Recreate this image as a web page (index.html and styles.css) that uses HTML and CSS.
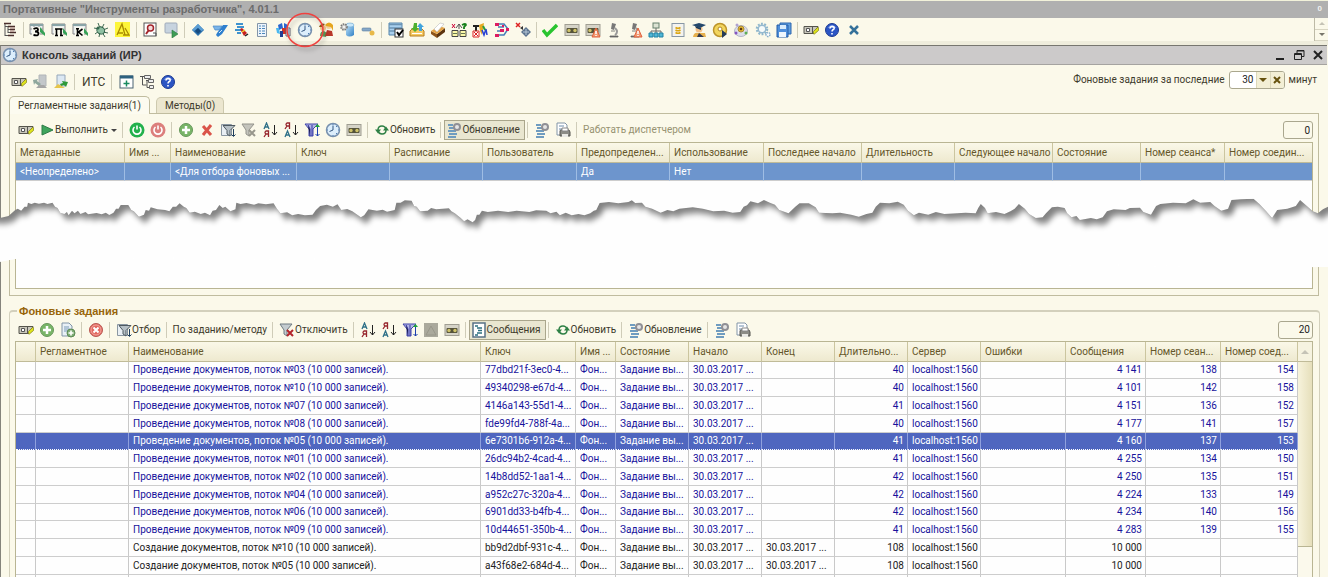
FILE: index.html
```html
<!DOCTYPE html>
<html lang="ru">
<head>
<meta charset="utf-8">
<title>Консоль заданий (ИР)</title>
<link rel="stylesheet" href="styles.css">
</head>
<body>
<svg class="sprite" aria-hidden="true">
  <defs>
    <linearGradient id="blueG" x1="0" y1="0" x2="1" y2="1"><stop offset="0" stop-color="#bfe4fa"/><stop offset="1" stop-color="#2f7fc4"/></linearGradient>
  </defs>
  <symbol id="tree" viewBox="0 0 16 16"><path d="M3 1v13M3 4.500h3M6 7.500h3M6 10.500h3M3 13.500h3M6 4v7" stroke="#555" fill="none"/><path d="M2 1.500h7M6 4.500h7M8 7.500h5M8 10.500h6M6 13.500h6" stroke="#4a2f2c" stroke-width="1.400"/><path d="M8 6h5M8 9h4" stroke="#b08a84"/></symbol>
  <symbol id="grid3" viewBox="0 0 16 16"><path d="M1 2h13v10H1z" fill="#e9eef0" stroke="#888"/><path d="M1 2h13v2H1z" fill="#8aa5a8"/><path d="M1 7h13M5 4v7M10 4v7" stroke="#999"/><path d="M11 5l5 6v3l-5-4z" fill="#36a256"/><rect x="3" y="5" width="8" height="10" fill="#f9f9ef"/><path d="M4.500 7q4-2 4.500.5 0 2-3 2 3.500 0 3.500 2.200 0 2.500-5 1.300" stroke="#000" stroke-width="1.800" fill="none"/></symbol>
  <symbol id="gridP" viewBox="0 0 16 16"><path d="M1 2h13v10H1z" fill="#e9eef0" stroke="#888"/><path d="M1 2h13v2H1z" fill="#8aa5a8"/><path d="M11 5l5 6v3l-5-4z" fill="#36a256"/><rect x="3" y="5" width="9" height="10" fill="#f9f9ef"/><path d="M5.500 14V7h4.500v7M4 7h7.500M4 13.500h3M9 13.500h3" stroke="#000" stroke-width="1.600" fill="none"/></symbol>
  <symbol id="gridK" viewBox="0 0 16 16"><path d="M1 2h13v10H1z" fill="#e9eef0" stroke="#888"/><path d="M1 2h13v2H1z" fill="#8aa5a8"/><path d="M11 5l5 6v3l-5-4z" fill="#36a256"/><rect x="3" y="5" width="9" height="10" fill="#f9f9ef"/><path d="M5.500 6.500v7M10.500 7l-4 3 4 3.500M4 6.800h3M4 13.500h3" stroke="#000" stroke-width="1.600" fill="none"/></symbol>
  <symbol id="bug" viewBox="0 0 16 16"><path d="M5 1l2 5M11 2L9 6M1 6l5 1M15 6l-5 2M2 12l4-3M15 11l-5-1M6 15l1-5M12 15l-3-5" stroke="#3f6a52"/><ellipse cx="8" cy="8.500" rx="4" ry="3.500" transform="rotate(30 8 8)" fill="#8fc0a2" stroke="#2f5d46"/><circle cx="5" cy="6" r="1.500" fill="#35694f"/></symbol>
  <symbol id="ruler" viewBox="0 0 16 16"><rect x="1" y="0" width="15" height="15" fill="#fdf53a"/><path d="M3 13L8 2l3 11M4 11h5M9 13h6l-4-7" stroke="#a98a00" fill="none" stroke-width="1.300"/></symbol>
  <symbol id="find" viewBox="0 0 16 16"><rect x="2" y="1" width="12" height="13" fill="#fff" stroke="#555"/><circle cx="8.500" cy="6" r="3" fill="#f4dada" stroke="#a3252b" stroke-width="1.500"/><path d="M6.500 8.500L4 12" stroke="#a3252b" stroke-width="2"/><path d="M11 11h3v3" stroke="#555" fill="none"/></symbol>
  <symbol id="run" viewBox="0 0 16 16"><rect x="2" y="1" width="12" height="10" rx="1" fill="#c7d3df" stroke="#a0abba"/><path d="M9 8l6 4-6 4z" fill="#3e9c56" stroke="#287a3e" stroke-width=".6"/></symbol>
  <symbol id="diamond" viewBox="0 0 16 16"><path d="M8 2l6 6-6 6-6-6z" fill="#2d72ad"/><path d="M8 2l6 6-3 1-3-3-4 3-2-1z" fill="#5b9ed4"/><path d="M8 6l3 3-3 3-3-3z" fill="#164b80"/></symbol>
  <symbol id="book" viewBox="0 0 16 16"><path d="M1 4h9L7 8H3z" fill="#7ab4e8" stroke="#4b88c4" stroke-width=".7"/><path d="M5 11l6-8h5l-6 9-4 3-2-2z" fill="#2f80cf"/><path d="M7 11l3-3" stroke="#cfe6f8"/></symbol>
  <symbol id="lines" viewBox="0 0 16 16"><path d="M3 2h7M4 5h7M2 8h6M4 11h4" stroke="#3f93cf" stroke-width="2"/><path d="M7 7l2-1 5 5-3 3z" fill="#c62020"/><path d="M9 10l3-2" stroke="#f3d030" stroke-width="1.500"/><path d="M12 14l3-2" stroke="#222" stroke-width="1.500"/></symbol>
  <symbol id="sheet" viewBox="0 0 16 16"><path d="M3.500 1.500h9v13h-9z" fill="#eef5fb" stroke="#8395a8"/><path d="M5 4h2m1 0h3M5 6.500h2m1 0h3M5 9h2m1 0h3M5 11.500h2m1 0h3" stroke="#4c87bb"/></symbol>
  <symbol id="plug" viewBox="0 0 16 16"><path d="M3 3l4-2 1 5-4 2zM9 1l4 2-2 4-2-1z" fill="#2a67d0"/><path d="M1 6l3 0 1 6-3-1z" fill="#4ab8f0"/><path d="M7 6h4v6H7z" fill="#d13228"/><path d="M5 9h3v6H5z" fill="#223f94"/><path d="M11 6h4v8h-4z" fill="#fff" stroke="#667"/><path d="M12 8h2m-2 2h2m-2 2h2" stroke="#569"/></symbol>
  <symbol id="clock" viewBox="0 0 16 16"><circle cx="8" cy="8" r="6.500" fill="#dceefc" stroke="#7790ad" stroke-width="1.500"/><path d="M8 3.500V8L4.500 9.500" stroke="#33557f" fill="none"/><path d="M8 2v1M8 13v1M2 8h1M13 8h1M11 11l1 1M11 5l1-1" stroke="#4d7fb8"/></symbol>
  <symbol id="users" viewBox="0 0 16 16"><circle cx="5" cy="6" r="3" fill="#f4c78b"/><path d="M1 5q2-5 6-3L4 5z" fill="#8c5a17"/><path d="M2 14q0-5 4-5l3 2-1 4z" fill="#5d9a58"/><circle cx="11" cy="4" r="3" fill="#f7d29c"/><path d="M7 3q4-5 8 0v6l-2-4-5-1z" fill="#e5a61e"/><path d="M7 14l2-6 5 1 1 5z" fill="#b9392a"/></symbol>
  <symbol id="dbgear" viewBox="0 0 16 16"><path d="M7 3v10q3 3 8 0V3z" fill="url(#blueG)"/><ellipse cx="11" cy="3" rx="4" ry="2" fill="#c9e8fa" stroke="#6aa5d0" stroke-width=".6"/><circle cx="5" cy="5" r="3" fill="#c6c6c2" stroke="#777" stroke-width="1.500" stroke-dasharray="1.500 1"/><circle cx="5" cy="5" r="1" fill="#fff"/></symbol>
  <symbol id="key" viewBox="0 0 16 16"><rect x="2" y="6" width="9" height="3" rx="1" fill="#86a9c8" stroke="#5b7d9d" stroke-width=".6"/><circle cx="12" cy="11" r="2.500" fill="#e8b94a"/></symbol>
  <symbol id="formcheck" viewBox="0 0 16 16"><path d="M1 1h13v12H1z" fill="#a9d0ee" stroke="#5585ad"/><path d="M1 2.500h13M1 6h13M1 9h6" stroke="#6b94b5" stroke-width="1.500"/><rect x="7" y="7" width="8" height="8" fill="#fff" stroke="#333"/><path d="M9 10l2 3 4-5" stroke="#000" stroke-width="2" fill="none"/></symbol>
  <symbol id="exchange" viewBox="0 0 16 16"><path d="M1 9l2-2h10l2 2v5H1z" fill="#f5ca62" stroke="#b67c1c"/><path d="M5 1h3v5h2L6 10 2 6h2z" fill="#4eaf2e"/><path d="M11 1l4 4h-2v4h-3V5H8z" fill="#42a4dc"/><path d="M3 11.500h10" stroke="#fff"/></symbol>
  <symbol id="brick" viewBox="0 0 16 16"><path d="M1 9l6 3v4l-6-4z" fill="#8e551a"/><path d="M7 12l8-6v4l-8 6z" fill="#5d3510"/><path d="M1 9l8-5 6 2-8 6z" fill="#e3a244"/><path d="M4 7l6-6 4 1-7 8z" fill="#fff" stroke="#bbb" stroke-width=".6"/></symbol>
  <symbol id="compare" viewBox="0 0 16 16"><path d="M1 2l3 4m0-4L1 6" stroke="#c03"/><path d="M5 6l3-4 3 4M8 2v5" stroke="#555" fill="none"/><path d="M11 3q4-2 4 0l-2 2v2" stroke="#17801b" stroke-width="1.800" fill="none"/><path d="M1 8.500h6v6H1zM9 8.500h6v6H9z" fill="#fbf8a8" stroke="#444"/><path d="M2 11.500h4M10 11.500h4" stroke="#675"/></symbol>
  <symbol id="chart" viewBox="0 0 16 16"><path d="M1 4h6M4 4v5" stroke="#222" stroke-width="2"/><path d="M1 9h6v6H1z" fill="#fff" stroke="#d22"/><path d="M2 10l4 4m0-4l-4 4" stroke="#d22"/><path d="M7 3l5-2-2 12-2-4z" fill="#e5a920"/><path d="M10 8l2 5 2-6 1 6" stroke="#2740d4" stroke-width="1.500" fill="none"/><path d="M11 4l2 4" stroke="#2a9b3c" stroke-width="2"/></symbol>
  <symbol id="schema" viewBox="0 0 16 16"><path d="M3 2h7l4 5-4 6H3M4 5h6M3 9h7" stroke="#467eb8" stroke-width="1.500" fill="none"/><path d="M1 1h4v3H1zM1 12h4v3H1zM6 7h4v3H6zM12 6h3v3h-3zM8 3h2v2H8z" fill="#dd1b62"/></symbol>
  <symbol id="xdiamond" viewBox="0 0 16 16"><path d="M1 1l4 4m0-4L1 5" stroke="#d22" stroke-width="1.500"/><path d="M5 6l3-2v4z" fill="#333"/><path d="M11 5l5 5-5 5-5-5z" fill="#5d748f"/><path d="M11 7v6M8 10h6" stroke="#b6c7d7"/></symbol>
  <symbol id="check" viewBox="0 0 16 16"><path d="M1 8l4 5L15 3" stroke="#29c42f" stroke-width="3.500" fill="none"/></symbol>
  <symbol id="tape" viewBox="0 0 16 16"><rect x="1" y="2.500" width="14" height="11" fill="#d6d4c8" stroke="#a09e92"/><rect x="2.500" y="6" width="11" height="5" rx="1" fill="#55533a"/><circle cx="5" cy="8.500" r="1.700" fill="#cfc36a"/><circle cx="11" cy="8.500" r="1.700" fill="#cfc36a"/></symbol>
  <symbol id="warn" viewBox="0 0 16 16"><path d="M11 6l4 9H7z" fill="#f29a72" stroke="#e0603c"/><path d="M11 9v3m0 1v1" stroke="#fff" stroke-width="1.500"/></symbol>
  <symbol id="scope" viewBox="0 0 16 16"><path d="M6 1l4 1-2 6-3-1z" fill="#777"/><path d="M9 6q4 4 0 7" stroke="#999" stroke-width="2" fill="none"/><path d="M4 14h8v1H4zM5 9h4" stroke="#666" fill="#666" stroke-width=".8"/></symbol>
  <symbol id="org" viewBox="0 0 16 16"><path d="M8 6v3M3 11V9h10v2M8 9v2" stroke="#666" fill="none"/><rect x="5" y="1" width="6" height="5" fill="#dce3d3" stroke="#66806c"/><path d="M1 11h4v4H1zM6 11h4v4H6zM11 11h4v4h-4z" fill="#4fb6d6" stroke="#2383a5"/></symbol>
  <symbol id="note" viewBox="0 0 16 16"><rect x="2" y="1.500" width="12" height="13" fill="#f4f3ee" stroke="#8897a5"/><path d="M5.500 5.500q2.500 1.500 5 0M5.500 8q2.500 1.500 5 0M5.500 10.500q2.500 1.500 5 0" stroke="#dba511" stroke-width="1.700" fill="none"/></symbol>
  <symbol id="grad" viewBox="0 0 16 16"><circle cx="8" cy="7" r="3.500" fill="#f2c08a"/><path d="M1 3l7-2 7 2-6 3z" fill="#24486c"/><path d="M4 4l6 2v2L5 6z" fill="#183a5c"/><path d="M2 15q1-5 5-4l7 0 1 4z" fill="#e6b04c"/><path d="M8 11l5 4H6z" fill="#323a50"/></symbol>
  <symbol id="disc" viewBox="0 0 16 16"><circle cx="8" cy="8" r="6.500" fill="#f2d55d" stroke="#bd942a" stroke-width="1.500"/><circle cx="8" cy="7" r="2" fill="#fff" stroke="#b08720"/><path d="M10 8l5 4-5 4z" fill="#243a57"/></symbol>
  <symbol id="cam" viewBox="0 0 16 16"><ellipse cx="8" cy="9" rx="6.500" ry="5.500" fill="#dcdee9" stroke="#b4b7c7"/><circle cx="8" cy="7" r="3" fill="#e6ba32" stroke="#a88a38"/><circle cx="8" cy="7" r="1.300" fill="#5b3b13"/><circle cx="3" cy="11" r="1.500" fill="#8555c0"/><circle cx="13" cy="11" r="1.500" fill="#5caf55"/><circle cx="4" cy="3" r="1.500" fill="#b0a2d0"/></symbol>
  <symbol id="gears" viewBox="0 0 16 16"><circle cx="7" cy="7" r="5" fill="none" stroke="#8eb6cc" stroke-width="2.500" stroke-dasharray="1.800 1.340"/><circle cx="7" cy="7" r="3.800" fill="#f5fafa" stroke="#95b9cf" stroke-width="1.500"/><circle cx="13" cy="12.500" r="2" fill="#fff" stroke="#85aecb" stroke-width="1.500" stroke-dasharray="1.500 .8"/></symbol>
  <symbol id="save" viewBox="0 0 16 16"><path d="M4 1h11v11H4z" fill="#5f9fe0" stroke="#2e67ae"/><path d="M1 3h11v12H1z" fill="#4f8fdb" stroke="#245da6"/><path d="M4 3h6v4H4z" fill="#d8ebfb"/><path d="M3 10h7v5H3z" fill="#eef6fd"/></symbol>
  <symbol id="form" viewBox="0 0 16 16"><path d="M1 4.500h14l-4 7H1z" fill="#c9c7bb" stroke="#55544c"/><path d="M3.500 6.500h3v3h-3z" fill="#fff" stroke="#555"/><path d="M9.500 5v6" stroke="#555"/><path d="M10.500 9.500l4-4h1v3l-4 3.500h-1z" fill="#dfe41c" stroke="#7d7b20" stroke-width=".7"/></symbol>
  <symbol id="help" viewBox="0 0 16 16"><circle cx="8" cy="8" r="6.500" fill="#2b55c4" stroke="#1d3b91"/><path d="M3.500 6Q8 0 12.500 6 8 4.500 3.500 6z" fill="#7e9de8"/><path d="M6 6.500q.2-2 2.200-2 2.300.2 1.900 2-.3 1-1.500 1.500-.5.400-.5 1.500M8 11v1.500" stroke="#fff" stroke-width="1.600" fill="none"/></symbol>
  <symbol id="close" viewBox="0 0 16 16"><path d="M4 4l8 8m0-8l-8 8" stroke="#35719a" stroke-width="2.500"/></symbol>
  <symbol id="in" viewBox="0 0 16 16"><path d="M7 1h7v11H7z" fill="#c3c7ca" stroke="#b1b5b8"/><path d="M1 6l5-1-1 2 4 3-2 2-4-3-1 2z" fill="#8fa79d"/><path d="M4 14l3-3h5l3 3z" fill="#a5a5a5"/></symbol>
  <symbol id="out" viewBox="0 0 16 16"><path d="M4 1h8v11H4z" fill="#dce8f3" stroke="#96a7ba"/><path d="M9 7l6 1-2 5-2-2-3 1-1-2 3-1z" fill="#2f9a3a"/><path d="M1 14l4-4 7 4z" fill="#e6c54b"/></symbol>
  <symbol id="addwin" viewBox="0 0 16 16"><rect x="2" y="2" width="13" height="12" fill="#fff" stroke="#4a6272"/><path d="M2 3h13" stroke="#2e617f" stroke-width="3"/><path d="M8.500 6.500v6M5.500 9.500h6" stroke="#188a5f" stroke-width="1.500"/></symbol>
  <symbol id="tree2" viewBox="0 0 16 16"><path d="M1 2.500h4M3.500 3v8h4M7 6.500h2m-1 0v7h2" stroke="#555" fill="none"/><path d="M5.500 1.500h6v3h-6zM9.500 5.500h5v3h-5zM10.500 11.500h4v3h-4z" fill="#eee" stroke="#666"/></symbol>
  <symbol id="play" viewBox="0 0 16 16"><path d="M3 3l11 5-11 5z" fill="#3fa55c" stroke="#2f7c47"/></symbol>
  <symbol id="on" viewBox="0 0 16 16"><circle cx="8" cy="8" r="7.500" fill="#22b14c"/><path d="M5.500 5a4 4 0 1 0 5 0M8 3.500v4" stroke="#fff" stroke-width="1.600" fill="none"/></symbol>
  <symbol id="off" viewBox="0 0 16 16"><circle cx="8" cy="8" r="7.500" fill="#dc7f7c"/><path d="M5.500 5a4 4 0 1 0 5 0M8 3.500v4" stroke="#fff" stroke-width="1.600" fill="none"/></symbol>
  <symbol id="add" viewBox="0 0 16 16"><circle cx="8" cy="8" r="6.500" fill="#79b568" stroke="#66975b"/><path d="M8 4v8M4 8h8" stroke="#fff" stroke-width="2.500"/></symbol>
  <symbol id="del" viewBox="0 0 16 16"><path d="M4 4l8 9M12 3l-8 10" stroke="#da5449" stroke-width="3"/></symbol>
  <symbol id="filter" viewBox="0 0 16 16"><path d="M1.500 2.500h10v11h-10z" fill="#e9eff4" stroke="#8a97a2"/><path d="M3 3.500h12l-5 5V14l-3-2V8.500z" fill="#b6c0c6" stroke="#4f5a61"/><path d="M13.500 7v7m-2-1.500l2 2 2-2" stroke="#1e3e5c" fill="none"/></symbol>
  <symbol id="nofilter" viewBox="0 0 16 16"><path d="M1 2h12L8 8v6l-3-2V8z" fill="#c4c4bc" stroke="#93938b"/><path d="M8 8l6 6m0-6l-6 6" stroke="#98978d" stroke-width="2"/></symbol>
  <symbol id="nofilterR" viewBox="0 0 16 16"><path d="M1 2h12L8 8v6l-3-2V8z" fill="#c4ccd0" stroke="#6f7b82"/><path d="M8 8l6 6m0-6l-6 6" stroke="#b3242b" stroke-width="2"/></symbol>
  <symbol id="asc" viewBox="0 0 16 16"><path d="M2 7l2.500-6L7 7M3 5h3" stroke="#2e7088" stroke-width="1.300" fill="none"/><path d="M6.500 15V9H4q-2 1.500 0 3h2.500M4 12l-2 3" stroke="#97242c" stroke-width="1.300" fill="none"/><path d="M12.500 3v10m-2.500-3l2.500 3 2.500-3" stroke="#222" fill="none"/></symbol>
  <symbol id="desc" viewBox="0 0 16 16"><path d="M6.500 7V1H4q-2 1.500 0 3h2.500M4 4L2 7" stroke="#97242c" stroke-width="1.300" fill="none"/><path d="M2 15l2.500-6L7 15M3 13h3" stroke="#2e7088" stroke-width="1.300" fill="none"/><path d="M12.500 3v10m-2.500-3l2.500 3 2.500-3" stroke="#222" fill="none"/></symbol>
  <symbol id="sortf" viewBox="0 0 16 16"><path d="M1 2h13L9 7v7H5V7z" fill="#b3b4e4" stroke="#4044ab"/><path d="M4 3l2 4v7M8 3v11" stroke="#3337a5"/><path d="M13.500 4v10m-2-2l2 2 2-2" stroke="#1c3fae" fill="none"/><path d="M11 5l2.500-3L16 5z" fill="#20a53a"/></symbol>
  <symbol id="refresh" viewBox="0 0 16 16"><path d="M4 8q0-4 4-4 3 0 4 3M12 8q0 4-4 4-3 0-4-3" stroke="#2e8045" stroke-width="1.500" fill="none"/><path d="M1 7.500h6l-3 4zM9 8.500h6l-3-4z" fill="#2e8045"/></symbol>
  <symbol id="listgear" viewBox="0 0 16 16"><path d="M2 3h5M3 6h5M2 9h8M3 12h8M2 15h8" stroke="#6f9cc0" stroke-width="2"/><circle cx="11" cy="5" r="3" fill="#e5e5e5" stroke="#909096" stroke-width="2"/></symbol>
  <symbol id="print" viewBox="0 0 16 16"><path d="M2 1h8l2 2v10H2z" fill="#fff" stroke="#8295a7"/><path d="M4 4h5M4 7h3" stroke="#6a8bac"/><path d="M5 9q0-1 1-1h8l1 2v4H5z" fill="#8b8b85" stroke="#55554f"/><path d="M7 6h6v3H7z" fill="#fff" stroke="#888"/><path d="M7 12h6v3H7z" fill="#e9e9e4"/></symbol>
  <symbol id="addcopy" viewBox="0 0 16 16"><path d="M2 1h7l3 3v10H2z" fill="#e8f0f6" stroke="#8295a7"/><path d="M4 5h5M4 7h6M4 9h4" stroke="#7a9ab8"/><circle cx="11" cy="11" r="4" fill="#7fae75" stroke="#5c8a54"/><path d="M11 8.500v5M8.500 11h5" stroke="#fff" stroke-width="1.600"/></symbol>
  <symbol id="stop" viewBox="0 0 16 16"><circle cx="8" cy="8" r="6.500" fill="#e2685f" stroke="#b85953"/><circle cx="8" cy="8" r="5" fill="none" stroke="#f3a7a0"/><path d="M5.500 5.500l5 5m0-5l-5 5" stroke="#fff" stroke-width="2"/></symbol>
  <symbol id="dim" viewBox="0 0 16 16"><rect x="1" y="1" width="14" height="14" fill="#aaa99c"/><path d="M3 13L8 4l5 9z" fill="none" stroke="#98978a"/></symbol>
  <symbol id="msgs" viewBox="0 0 16 16"><path d="M2 1h12v14H2z" fill="#fff" stroke="#587286" stroke-width="1.500"/><path d="M4 4h3M6 6h5M7 8.500h4M6 11h5M4 13h3" stroke="#2d7080" stroke-width="1.300"/></symbol>
</svg>

<header class="app">
  <div class="app-title"><span>Портативные "Инструменты разработчика", 4.01.1</span><i class="grip">0</i></div>
  <div class="app-bar">
    <div class="main-tools">
      <button aria-label="Дерево"><svg><use href="#tree"/></svg></button><i class="sep"></i>
      <button aria-label="Запросы"><svg><use href="#grid3"/></svg></button>
      <button aria-label="Права"><svg><use href="#gridP"/></svg></button>
      <button aria-label="Код"><svg><use href="#gridK"/></svg></button>
      <button aria-label="Отладка"><svg><use href="#bug"/></svg></button>
      <button aria-label="Конструктор"><svg><use href="#ruler"/></svg></button><i class="sep"></i>
      <button aria-label="Найти"><svg><use href="#find"/></svg></button>
      <button aria-label="Запустить"><svg><use href="#run"/></svg></button><i class="sep"></i>
      <button aria-label="Объект"><svg><use href="#diamond"/></svg></button>
      <button aria-label="Справочник"><svg><use href="#book"/></svg></button>
      <button aria-label="Редактор"><svg><use href="#lines"/></svg></button>
      <button aria-label="Список"><svg><use href="#sheet"/></svg></button>
      <button aria-label="Подписки"><svg><use href="#plug"/></svg></button>
      <button class="marked" aria-label="Консоль заданий"><svg><use href="#clock"/></svg><svg class="ring" viewBox="0 0 40 38"><ellipse cx="20" cy="19" rx="18" ry="16.500"/></svg></button>
      <button aria-label="Пользователи"><svg><use href="#users"/></svg></button>
      <button aria-label="База данных"><svg><use href="#dbgear"/></svg></button>
      <button aria-label="Ключ"><svg><use href="#key"/></svg></button><i class="sep"></i>
      <button aria-label="Обработка"><svg><use href="#formcheck"/></svg></button>
      <button aria-label="Обмен"><svg><use href="#exchange"/></svg></button>
      <button aria-label="Пакет"><svg><use href="#brick"/></svg></button>
      <button aria-label="Сравнение"><svg><use href="#compare"/></svg></button>
      <button aria-label="Отчёт"><svg><use href="#chart"/></svg></button>
      <button aria-label="Схема"><svg><use href="#schema"/></svg></button>
      <button aria-label="Удаление"><svg><use href="#xdiamond"/></svg></button><i class="sep"></i>
      <button aria-label="Проверка"><svg><use href="#check"/></svg></button>
      <button aria-label="Журнал"><svg><use href="#tape"/></svg></button>
      <button aria-label="Ошибки журнала"><svg><use href="#tape"/><use href="#warn"/></svg></button>
      <button aria-label="Исследовать"><svg><use href="#scope"/></svg></button>
      <button aria-label="Исследовать ошибку"><svg><use href="#scope"/><use href="#warn"/></svg></button>
      <button aria-label="Структура"><svg><use href="#org"/></svg></button>
      <button aria-label="Заметка"><svg><use href="#note"/></svg></button>
      <button aria-label="Обучение"><svg><use href="#grad"/></svg></button>
      <button aria-label="Диск"><svg><use href="#disc"/></svg></button>
      <button aria-label="Монитор"><svg><use href="#cam"/></svg></button>
      <button aria-label="Настройки"><svg><use href="#gears"/></svg></button>
      <button aria-label="Сохранить"><svg><use href="#save"/></svg></button><i class="sep"></i>
      <button aria-label="Форма"><svg><use href="#form"/></svg></button>
      <button aria-label="Справка"><svg><use href="#help"/></svg></button>
      <button aria-label="Закрыть панель"><svg><use href="#close"/></svg></button>
    </div>
    <div class="bar-scroll"><button aria-label="Вверх"><i class="up"></i></button><button aria-label="Вниз"><i class="down"></i></button></div>
  </div>
</header>

<main class="window">
  <div class="window-title">
    <svg class="ico"><use href="#clock"/></svg><h1>Консоль заданий (ИР)</h1>
    <div class="window-buttons">
      <button aria-label="Свернуть"><svg viewBox="0 0 12 12"><path d="M2 10h8" stroke="#222" stroke-width="2"/></svg></button>
      <button aria-label="Восстановить"><svg viewBox="0 0 12 12"><path d="M4 4V1.500h7v6H8M4 2h7M1.500 4.500h7v6h-7zM1 5.500h7" stroke="#222" fill="none"/></svg></button>
      <button aria-label="Закрыть"><svg viewBox="0 0 12 12"><path d="M2 2l8 8m0-8l-8 8" stroke="#222" stroke-width="2"/></svg></button>
    </div>
  </div>
  <div class="command-row">
    <div class="tools">
      <button aria-label="Форма"><svg><use href="#form"/></svg></button>
      <button aria-label="Загрузить"><svg><use href="#in"/></svg></button>
      <button aria-label="Выгрузить"><svg><use href="#out"/></svg></button><i class="sep"></i>
      <button class="its">ИТС</button><i class="sep"></i>
      <button aria-label="Новое окно"><svg><use href="#addwin"/></svg></button>
      <button aria-label="Структура"><svg><use href="#tree2"/></svg></button>
      <button aria-label="Справка"><svg><use href="#help"/></svg></button>
    </div>
    <div class="period">
      <label for="minutes">Фоновые задания за последние</label>
      <span class="combo"><input id="minutes" value="30"><button aria-label="Выбрать"><i class="down"></i></button><button aria-label="Очистить"><svg viewBox="0 0 8 8"><path d="M1 1l6 6m0-6L1 7" stroke="#66520f" stroke-width="2"/></svg></button></span>
      <span>минут</span>
    </div>
  </div>
  <nav class="tabs"><button class="tab active">Регламентные задания(1)</button><button class="tab">Методы(0)</button></nav>

  <section class="panel">
    <div class="panel-bar">
      <div class="tools">
        <button aria-label="Форма"><svg><use href="#form"/></svg></button>
        <button><svg><use href="#play"/></svg>Выполнить<i class="down dark"></i></button><i class="sep"></i>
        <button aria-label="Включить"><svg><use href="#on"/></svg></button>
        <button aria-label="Выключить"><svg><use href="#off"/></svg></button><i class="sep"></i>
        <button aria-label="Добавить"><svg><use href="#add"/></svg></button>
        <button aria-label="Удалить"><svg><use href="#del"/></svg></button>
        <button aria-label="Отбор"><svg><use href="#filter"/></svg></button>
        <button aria-label="Снять отбор"><svg><use href="#nofilter"/></svg></button>
        <button aria-label="По возрастанию"><svg><use href="#asc"/></svg></button>
        <button aria-label="По убыванию"><svg><use href="#desc"/></svg></button>
        <button aria-label="Сортировка"><svg><use href="#sortf"/></svg></button>
        <button aria-label="Расписание"><svg><use href="#clock"/></svg></button>
        <button aria-label="Журнал"><svg><use href="#tape"/></svg></button><i class="sep"></i>
        <button><svg><use href="#refresh"/></svg>Обновить</button><i class="sep"></i>
        <button class="pressed"><svg><use href="#listgear"/></svg>Обновление</button><i class="sep"></i>
        <button aria-label="Настройка списка"><svg><use href="#listgear"/></svg></button>
        <button aria-label="Вывести список"><svg><use href="#print"/></svg></button><i class="sep"></i>
        <button class="muted">Работать диспетчером</button>
      </div>
      <input class="count" value="0" readonly aria-label="Количество заданий">
    </div>
    <div class="table-box first-box">
      <table class="schedule">
        <colgroup><col class="w109"><col class="w46"><col><col class="w93"><col class="w93"><col class="w94"><col class="w93"><col class="w94"><col class="w98"><col class="w93"><col class="w98"><col class="w88"><col class="w84"><col class="w87"></colgroup>
        <thead><tr><th>Метаданные</th><th>Имя ...</th><th>Наименование</th><th>Ключ</th><th>Расписание</th><th>Пользователь</th><th>Предопределен...</th><th>Использование</th><th>Последнее начало</th><th>Длительность</th><th>Следующее начало</th><th>Состояние</th><th>Номер сеанса*</th><th>Номер соедин...</th></tr></thead>
        <tbody><tr><td>&lt;Неопределено&gt;</td><td></td><td>&lt;Для отбора фоновых ...</td><td></td><td></td><td></td><td>Да</td><td>Нет</td><td></td><td></td><td></td><td></td><td></td><td></td></tr></tbody>
      </table>
    </div>
  </section>

  <fieldset class="jobs">
    <legend>Фоновые задания</legend>
    <div class="panel-bar">
      <div class="tools">
        <button aria-label="Форма"><svg><use href="#form"/></svg></button>
        <button aria-label="Добавить"><svg><use href="#add"/></svg></button>
        <button aria-label="Скопировать"><svg><use href="#addcopy"/></svg></button><i class="sep"></i>
        <button aria-label="Отменить"><svg><use href="#stop"/></svg></button><i class="sep"></i>
        <button><svg><use href="#filter"/></svg>Отбор</button><i class="sep"></i>
        <button class="plain">По заданию/методу</button><i class="sep"></i>
        <button><svg><use href="#nofilterR"/></svg>Отключить</button><i class="sep"></i>
        <button aria-label="По возрастанию"><svg><use href="#asc"/></svg></button>
        <button aria-label="По убыванию"><svg><use href="#desc"/></svg></button>
        <button aria-label="Сортировка"><svg><use href="#sortf"/></svg></button>
        <button aria-label="Анализ" disabled><svg><use href="#dim"/></svg></button>
        <button aria-label="Журнал"><svg><use href="#tape"/></svg></button><i class="sep"></i>
        <button class="pressed"><svg><use href="#msgs"/></svg>Сообщения</button><i class="sep"></i>
        <button><svg><use href="#refresh"/></svg>Обновить</button><i class="sep"></i>
        <button><svg><use href="#listgear"/></svg>Обновление</button><i class="sep"></i>
        <button aria-label="Настройка списка"><svg><use href="#listgear"/></svg></button>
        <button aria-label="Вывести список"><svg><use href="#print"/></svg></button>
      </div>
      <input class="count wide" value="20" readonly aria-label="Количество фоновых заданий">
    </div>
    <div class="table-box jobs-box">
      <table class="background">
        <colgroup><col class="w20"><col class="w93"><col><col class="w95"><col class="w40"><col class="w73"><col class="w73"><col class="w73"><col class="w73"><col class="w73"><col class="w85"><col class="w80"><col class="w75"><col class="w77"></colgroup>
        <thead><tr><th></th><th>Регламентное</th><th>Наименование</th><th>Ключ</th><th>Имя ...</th><th>Состояние</th><th>Начало</th><th>Конец</th><th>Длительно...</th><th>Сервер</th><th>Ошибки</th><th>Сообщения</th><th>Номер сеан...</th><th>Номер соед...</th></tr></thead>
        <tbody>
          <tr><td></td><td></td><td>Проведение документов, поток №03 (10 000 записей).</td><td>77dbd21f-3ec0-4...</td><td>Фон...</td><td>Задание вы...</td><td>30.03.2017 ...</td><td></td><td>40</td><td>localhost:1560</td><td></td><td>4 141</td><td>138</td><td>154</td></tr>
          <tr><td></td><td></td><td>Проведение документов, поток №10 (10 000 записей).</td><td>49340298-e67d-4...</td><td>Фон...</td><td>Задание вы...</td><td>30.03.2017 ...</td><td></td><td>40</td><td>localhost:1560</td><td></td><td>4 101</td><td>142</td><td>158</td></tr>
          <tr><td></td><td></td><td>Проведение документов, поток №07 (10 000 записей).</td><td>4146a143-55d1-4...</td><td>Фон...</td><td>Задание вы...</td><td>30.03.2017 ...</td><td></td><td>41</td><td>localhost:1560</td><td></td><td>4 151</td><td>136</td><td>152</td></tr>
          <tr><td></td><td></td><td>Проведение документов, поток №08 (10 000 записей).</td><td>fde99fd4-788f-4a...</td><td>Фон...</td><td>Задание вы...</td><td>30.03.2017 ...</td><td></td><td>40</td><td>localhost:1560</td><td></td><td>4 177</td><td>141</td><td>157</td></tr>
          <tr class="selected"><td></td><td></td><td>Проведение документов, поток №05 (10 000 записей).</td><td>6e7301b6-912a-4...</td><td>Фон...</td><td>Задание вы...</td><td>30.03.2017 ...</td><td></td><td>41</td><td>localhost:1560</td><td></td><td>4 160</td><td>137</td><td>153</td></tr>
          <tr><td></td><td></td><td>Проведение документов, поток №01 (10 000 записей).</td><td>26dc94b2-4cad-4...</td><td>Фон...</td><td>Задание вы...</td><td>30.03.2017 ...</td><td></td><td>41</td><td>localhost:1560</td><td></td><td>4 255</td><td>134</td><td>150</td></tr>
          <tr><td></td><td></td><td>Проведение документов, поток №02 (10 000 записей).</td><td>14b8dd52-1aa1-4...</td><td>Фон...</td><td>Задание вы...</td><td>30.03.2017 ...</td><td></td><td>42</td><td>localhost:1560</td><td></td><td>4 250</td><td>135</td><td>151</td></tr>
          <tr><td></td><td></td><td>Проведение документов, поток №04 (10 000 записей).</td><td>a952c27c-320a-4...</td><td>Фон...</td><td>Задание вы...</td><td>30.03.2017 ...</td><td></td><td>42</td><td>localhost:1560</td><td></td><td>4 224</td><td>133</td><td>149</td></tr>
          <tr><td></td><td></td><td>Проведение документов, поток №06 (10 000 записей).</td><td>6901dd33-b4fb-4...</td><td>Фон...</td><td>Задание вы...</td><td>30.03.2017 ...</td><td></td><td>42</td><td>localhost:1560</td><td></td><td>4 234</td><td>140</td><td>156</td></tr>
          <tr><td></td><td></td><td>Проведение документов, поток №09 (10 000 записей).</td><td>10d44651-350b-4...</td><td>Фон...</td><td>Задание вы...</td><td>30.03.2017 ...</td><td></td><td>41</td><td>localhost:1560</td><td></td><td>4 283</td><td>139</td><td>155</td></tr>
          <tr class="done"><td></td><td></td><td>Создание документов, поток №10 (10 000 записей).</td><td>bb9d2dbf-931c-4...</td><td>Фон...</td><td>Задание вы...</td><td>30.03.2017 ...</td><td>30.03.2017 ...</td><td>108</td><td>localhost:1560</td><td></td><td>10 000</td><td></td><td></td></tr>
          <tr class="done"><td></td><td></td><td>Создание документов, поток №05 (10 000 записей).</td><td>a43f68e2-684d-4...</td><td>Фон...</td><td>Задание вы...</td><td>30.03.2017 ...</td><td>30.03.2017 ...</td><td>108</td><td>localhost:1560</td><td></td><td>10 000</td><td></td><td></td></tr>
          <tr class="done"><td></td><td></td><td></td><td></td><td></td><td></td><td></td><td></td><td></td><td></td><td></td><td></td><td></td><td></td></tr>
        </tbody>
      </table>
      <div class="scrollbar"><button aria-label="Прокрутить вверх"><i class="up"></i></button><div class="thumb"></div></div>
    </div>
  </fieldset>
</main>

<svg class="tear" viewBox="0 0 3136 234" preserveAspectRatio="none" aria-hidden="true">
  <defs>
    <path id="gap-shape" d="M-60 82L0 84 20 78 36 60 42 56 50 62 58 50 64 50 66 38 74 42 82 38 92 41 104 38 112 42 124 38 130 50 136 54 142 68 152 72 158 66 162 76 170 62 176 70 184 62 190 72 202 66 208 73 228 69 240 73 250 68 258 75 268 68 274 56 280 56 285 45 303 45 310 60 316 64 328 80 340 74 344 60 352 62 356 52 372 58 390 60 400 64 408 50 416 50 424 40 434 50 440 54 448 68 460 65 474 72 484 68 496 76 502 62 510 60 518 45 526 54 532 50 544 64 556 58 558 38 568 42 582 39 600 44 610 40 628 43 646 40 654 56 662 70 678 67 690 76 704 72 720 76 738 74 746 60 756 48 772 44 786 50 797 43 806 60 820 57 832 64 852 82 860 76 870 58 890 62 904 59 914 65 932 60 936 38 946 38 956 31 972 32 978 48 984 50 992 64 1010 62 1018 54 1030 58 1060 55 1066 64 1074 70 1088 84 1096 94 1104 88 1116 97 1122 90 1126 74 1132 74 1138 62 1152 66 1176 62 1200 66 1220 62 1250 66 1266 61 1290 62 1300 70 1314 65 1322 76 1336 68 1350 76 1366 72 1380 76 1394 70 1402 62 1408 60 1416 39 1438 36 1460 40 1484 36 1492 31 1500 39 1516 38 1524 50 1540 56 1560 68 1576 60 1590 64 1604 56 1636 52 1660 56 1684 64 1710 62 1730 68 1748 66 1756 50 1764 46 1772 34 1790 40 1804 30 1818 38 1830 44 1840 60 1862 70 1878 50 1888 40 1910 40 1926 52 1934 68 1966 70 1984 68 2010 74 2028 80 2046 72 2060 68 2068 50 2078 38 2100 40 2120 35 2134 44 2144 62 2158 76 2170 68 2192 74 2210 66 2230 72 2280 68 2304 70 2310 54 2316 42 2326 54 2332 70 2352 66 2372 72 2386 64 2396 56 2406 42 2420 56 2430 72 2446 84 2462 82 2470 70 2484 52 2498 50 2514 54 2520 70 2530 82 2542 78 2550 90 2576 84 2590 88 2604 82 2614 64 2630 58 2658 60 2668 54 2692 53 2700 66 2718 74 2730 48 2740 42 2770 38 2800 40 2818 28 2834 38 2858 36 2868 48 2884 62 2900 56 2908 30 2930 28 2960 26 2974 42 2990 64 3004 84 3016 60 3040 56 3060 48 3070 30 3084 46 3100 64 3112 70 3124 58 3136 50L3200 50V228L3098 232H2800L38 206 0 215-60 220z"/>
    <clipPath id="gap"><use href="#gap-shape"/></clipPath>
    <filter id="soft" x="-1%" y="-20%" width="102%" height="150%"><feGaussianBlur stdDeviation="6 9"/></filter>
  </defs>
  <g clip-path="url(#gap)">
    <rect width="3136" height="140" fill="#828282"/>
    <rect y="140" width="3136" height="94" fill="#fefefe"/>
    <use href="#gap-shape" x="11" y="17" fill="#fefefe" filter="url(#soft)"/>
  </g>
</svg>
</body>
</html>
```
FILE: styles.css
```css
* { box-sizing: border-box; }

body {
  margin: 0;
  height: 100vh;
  overflow: hidden;
  position: relative;
  display: flex;
  flex-direction: column;
  background: #fbf9ea;
  color: #3d3a2c;
  font: 10px/14px Roboto, "Liberation Sans", sans-serif;
}

button, input {
  font: inherit;
  color: inherit;
  margin: 0;
  padding: 0;
  border: 0;
  background: none;
}

.sprite { position: absolute; width: 0; height: 0; }

button > svg, .ico { width: 16px; height: 16px; flex: none; display: block; }

.app-title {
  display: flex;
  justify-content: space-between;
  border-top: 1px solid #f2f2da;
  background: #b0b0b0;
  color: #6c6c6c;
  padding: 1px 6px 2px 3px;
  font: bold 11px/14px "Liberation Sans", Arial, sans-serif;
}
.grip { color: #f0f0f0; font-style: normal; font-size: 8px; }

.app-bar {
  display: flex;
  justify-content: space-between;
  height: 27px;
  border-bottom: 4px solid #efeddc;
}
.main-tools {
  display: flex;
  justify-content: space-between;
  align-items: center;
  width: 862px;
  padding-left: 2px;
}
.sep {
  width: 1px;
  height: 16px;
  flex: none;
  background: #cfccb8;
}
.marked { position: relative; }
.ring {
  position: absolute;
  left: -12px;
  top: -11px;
  z-index: 3;
  overflow: visible;
  filter: drop-shadow(2px 3px 2px #0004);
}
button > .ring { width: 40px; height: 38px; }
.ring ellipse { fill: none; stroke: #f0413f; stroke-width: 1.5; }

.bar-scroll { display: flex; flex-direction: column; width: 14px; border-left: 1px solid #bdbaa6; }
.bar-scroll button { flex: 1; display: grid; place-items: center; border-bottom: 1px solid #d8d5c2; }

.up, .down { display: inline-block; border: 4px solid transparent; }
.up { border-top: 0; border-bottom-color: #c5c3b6; }
.down { border-bottom: 0; border-top-color: #66520f; }
.bar-scroll .up, .bar-scroll .down { border-width: 3px; }
.bar-scroll .down { border-top-color: #77756a; }
.down.dark { border-width: 3px; border-top-color: #444; margin-left: 3px; }

.window {
  flex: 1;
  display: flex;
  flex-direction: column;
  min-height: 0;
  border-top: 1px solid #77766f;
  border-left: 1px solid #85847c;
  margin-right: 1px;
}
.window-title {
  display: flex;
  align-items: center;
  height: 19px;
  flex: none;
  padding: 0 3px 0 1px;
  background: #cccaca;
  border-bottom: 1px solid #a5a3a0;
}
.window-title h1 { margin: 0 auto 0 4px; font: bold 11px/14px "Liberation Sans", Arial, sans-serif; color: #333; }
.window-buttons { display: flex; gap: 7px; }
.window-buttons svg { width: 12px; height: 12px; }

.command-row {
  display: flex;
  justify-content: space-between;
  height: 30px;
  flex: none;
  padding: 6px 10px 0;
}
.tools { display: flex; align-items: center; gap: 5px; }
.tools button { display: flex; align-items: center; white-space: nowrap; }
.tools .sep { margin-right: 1px; }
.command-row .tools { height: 22px; }
.tools .its { font-size: 12px; padding: 0 1px; }
.period { display: flex; align-items: center; gap: 4px; height: 18px; white-space: nowrap; }
.combo {
  display: flex;
  width: 56px;
  height: 18px;
  border: 1px solid #aaa78e;
  border-radius: 3px;
  background: #fff;
  overflow: hidden;
}
.combo input { width: 26px; text-align: right; padding-right: 2px; color: #222; }
.combo button { flex: 1; display: grid; place-items: center; background: #f3efd5; border-left: 1px solid #dcd8ba; }
.combo button svg { width: 8px; height: 8px; }

.tabs { display: flex; gap: 6px; padding-left: 8px; height: 18px; flex: none; align-items: flex-end; }
.tab {
  height: 16px;
  padding: 0 8px;
  border: 1px solid #cdc9ae;
  border-bottom: 0;
  border-radius: 5px 5px 0 0;
  background: #ebe6cf;
}
.tab.active { height: 18px; margin-bottom: -1px; background: #fcfbf0; position: relative; border-color: #c0bc9f; }

.panel {
  border: 1px solid #c0bc9f;
  margin: 0 8px;
  padding: 0 5px 6px;
  flex: none;
}
.panel-bar { display: flex; justify-content: space-between; align-items: center; height: 28px; padding: 4px 0 0 3px; }
.tools .pressed {
  height: 20px;
  padding: 0 4px 0 1px;
  margin: 0 -3px;
  border: 1px solid #aaa68c;
  background: #e9e6d0;
}
.muted { color: #979271; }
.count {
  width: 30px;
  height: 18px;
  padding-right: 2px;
  border: 1px solid #aaa78e;
  border-radius: 3px;
  text-align: right;
  color: #222;
}
.count.wide { width: 35px; }

.table-box { display: flex; border: 1px solid #b9b593; background: #fefefe; }
.first-box { height: 147px; align-items: flex-start; }
table { border-collapse: separate; border-spacing: 0; table-layout: fixed; width: 100%; }
th, td {
  padding: 0 1px 0 4px;
  overflow: hidden;
  white-space: nowrap;
  text-align: left;
  border-right: 1px solid #c9c9c9;
  border-bottom: 1px solid #cdcdcd;
  line-height: 14px;
}
th {
  height: 20px;
  font-weight: normal;
  color: #65572a;
  background: linear-gradient(#faf8e8, #eee9cf);
  border-right-color: #cbc59f;
  border-bottom-color: #c0bb98;
}
.schedule th:last-child, .schedule td:last-child { border-right: 0; }
.schedule td { height: 18px; background: #6d95cd; color: #fff; border-right-color: #9fbde4; }

.jobs {
  margin: 8px 7px 0 8px;
  padding: 0 6px 0 5px;
  border: 2px solid #d3d0bc;
  border-width: 2px 1px;
  border-radius: 4px;
  min-width: 0;
}
.jobs legend {
  margin-left: 2px;
  padding: 0 2px;
  font: bold 11px/14px "Liberation Sans", Arial, sans-serif;
  color: #97650b;
}
.jobs .panel-bar { height: 23px; padding-top: 0; }
.jobs-box { align-items: stretch; }
.background { flex: 1; width: 0; }
.background td { height: 18px; color: #17129c; }
.background tr:nth-child(4n + 1) td { height: 17px; }
.background .done td { color: #222; }
.background .selected td {
  background: #4f66bf;
  color: #fff;
  border-right-color: #8fa0dd;
  border-bottom: 1px dotted #fff;
}
.background td:nth-child(9), .background td:nth-child(12), .background td:nth-child(13), .background td:nth-child(14) { text-align: right; padding-right: 3px; }
.scrollbar { width: 14px; background: #fbf9ec; }
.scrollbar button { display: grid; place-items: center; width: 100%; height: 20px; border-bottom: 1px solid #c0bb98; background: #f6f3e0; }
.thumb { height: 185px; background: linear-gradient(90deg, #f7f3dc, #e6dfbb); border-bottom: 1px solid #b9b593; }

.w20 { width: 20px; }
.w40 { width: 40px; }
.w46 { width: 46px; }
.w73 { width: 73px; }
.w75 { width: 75px; }
.w77 { width: 77px; }
.w80 { width: 80px; }
.w84 { width: 84px; }
.w85 { width: 85px; }
.w87 { width: 87px; }
.w88 { width: 88px; }
.w93 { width: 93px; }
.w94 { width: 94px; }
.w95 { width: 95px; }
.w98 { width: 98px; }
.w109 { width: 109px; }

.tear { position: absolute; left: 0; top: 190px; width: 100%; height: 78px; z-index: 2; }
```
